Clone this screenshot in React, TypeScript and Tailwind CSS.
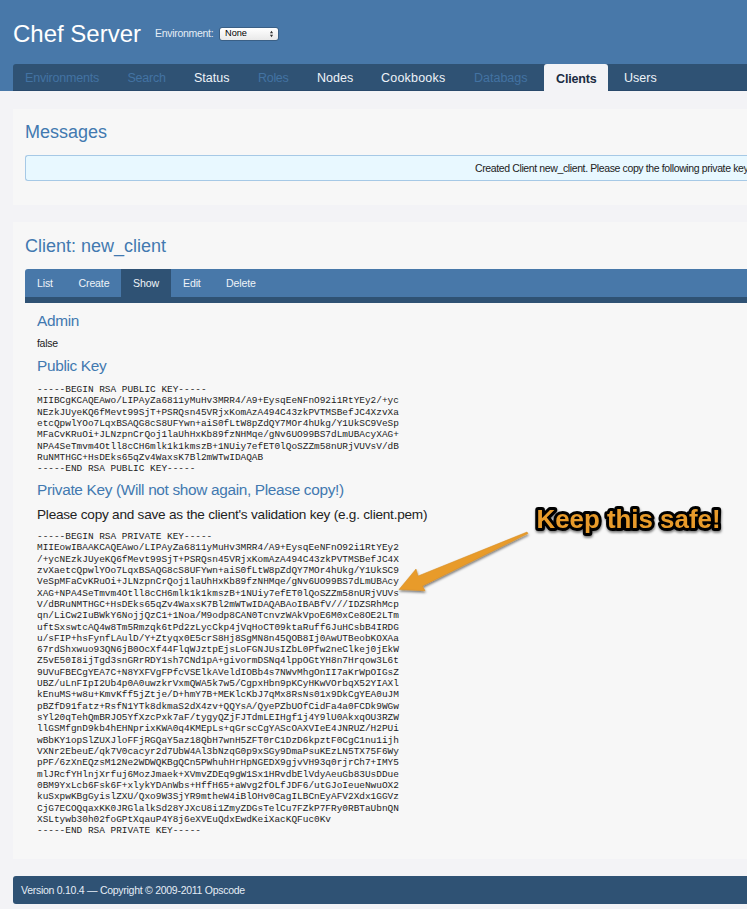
const publicKey = `-----BEGIN RSA PUBLIC KEY-----
MIIBCgKCAQEAwo/LIPAyZa6811yMuHv3MRR4/A9+EysqEeNFnO92i1RtYEy2/+yc
NEzkJUyeKQ6fMevt99SjT+PSRQsn45VRjxKomAzA494C43zkPVTMSBefJC4XzvXa
etcQpwlYOo7LqxBSAQG8cS8UFYwn+aiS0fLtW8pZdQY7MOr4hUkg/Y1UkSC9VeSp
MFaCvKRuOi+JLNzpnCrQoj1laUhHxKb89fzNHMqe/gNv6UO99BS7dLmUBAcyXAG+
NPA4SeTmvm4Otll8cCH6mlk1k1kmszB+1NUiy7efET0lQoSZZm58nURjVUVsV/dB
RuNMTHGC+HsDEks65qZv4WaxsK7Bl2mWTwIDAQAB
-----END RSA PUBLIC KEY-----`

const privateKey = `-----BEGIN RSA PRIVATE KEY-----
MIIEowIBAAKCAQEAwo/LIPAyZa6811yMuHv3MRR4/A9+EysqEeNFnO92i1RtYEy2
/+ycNEzkJUyeKQ6fMevt99SjT+PSRQsn45VRjxKomAzA494C43zkPVTMSBefJC4X
zvXaetcQpwlYOo7LqxBSAQG8cS8UFYwn+aiS0fLtW8pZdQY7MOr4hUkg/Y1UkSC9
VeSpMFaCvKRuOi+JLNzpnCrQoj1laUhHxKb89fzNHMqe/gNv6UO99BS7dLmUBAcy
XAG+NPA4SeTmvm4Otll8cCH6mlk1k1kmszB+1NUiy7efET0lQoSZZm58nURjVUVs
V/dBRuNMTHGC+HsDEks65qZv4WaxsK7Bl2mWTwIDAQABAoIBABfV///IDZSRhMcp
qn/LiCw2IuBWkY6NojjQzC1+1Noa/M9odp8CAN0TcnvzWAkVpoE6M0xCe8OE2LTm
uftSxswtcAQ4w8Tm5Rmzqk6tPd2zLycCkp4jVqHoCT09ktaRuff6JuHCsbB4IRDG
u/sFIP+hsFynfLAulD/Y+Ztyqx0E5crS8Hj8SgMN8n45QOB8Ij0AwUTBeobKOXAa
67rdShxwuo93QN6jB0OcXf44FlqWJztpEjsLoFGNJUsIZbL0Pfw2neClkej0jEkW
Z5vE50I8ijTgd3snGRrRDY1sh7CNd1pA+givormDSNq4lppOGtYH8n7Hrqow3L6t
9UVuFBECgYEA7C+N8YXFVgFPfcVSElkAVeldIOBb4s7NWvMhgOnII7aKrWpOIGsZ
UBZ/uLnFIpI2Ub4p0A0uwzkrVxmQWA5k7w5/CgpxHbn9pKCyHKwVOrbqX52YIAXl
kEnuMS+w8u+KmvKff5jZtje/D+hmY7B+MEKlcKbJ7qMx8RsNs01x9DkCgYEA0uJM
pBZfD91fatz+RsfN1YTk8dkmaS2dX4zv+QQYsA/QyePZbUOfCidFa4a0FCDk9WGw
sYl20qTehQmBRJO5YfXzcPxk7aF/tygyQZjFJTdmLEIHgf1j4Y9lU0AkxqOU3RZW
llGSMfgnD9kb4hEHNprixKWA0q4KMEpLs+qGrscCgYAScOAXVIeE4JNRUZ/H2PUi
wBbKY1opSlZUXJloFFjRGQaY5az18QbH7wnH5ZFT0rC1DzD6kpztF0CgC1nu1ijh
VXNr2EbeuE/qk7V0cacyr2d7UbW4Al3bNzqG0p9xSGy9DmaPsuKEzLN5TX75F6Wy
pPF/6zXnEQzsM12Ne2WDWQKBgQCn5PWhuhHrHpNGEDX9gjvVH93q0rjrCh7+IMY5
mlJRcfYHlnjXrfuj6MozJmaek+XVmvZDEq9gW1Sx1HRvdbElVdyAeuGb83UsDDue
0BM9YxLcb6Fsk6F+xlykYDAnWbs+HffH65+aWvg2fOLfJDF6/utGJoIeueNwuOX2
kuSxpwKBgGyislZXU/Qxo9W3SjYR9mtheW4iBlOHv0CagILBCnEyAFV2Xdx1GGVz
CjG7ECOQqaxKK0JRGlalkSd28YJXcU8i1ZmyZDGsTelCu7FZkP7FRy0RBTaUbnQN
XSLtywb30h02foGPtXqauP4Y8j6eXVEuQdxEwdKeiXacKQFuc0Kv
-----END RSA PRIVATE KEY-----`

const tabs = [
  { label: 'Environments', width: 'w-[102.5px] tracking-[-0.2px]', muted: true },
  { label: 'Search', width: 'w-[66.5px] tracking-[-0.25px]', muted: true },
  { label: 'Status', width: 'w-[64px]' },
  { label: 'Roles', width: 'w-[59px] tracking-[-0.3px]', muted: true },
  { label: 'Nodes', width: 'w-[64px]' },
  { label: 'Cookbooks', width: 'w-[93px] tracking-[0.2px]' },
  { label: 'Databags', width: 'w-[82px]', muted: true },
  { label: 'Clients', width: 'w-[64px] tracking-[-0.15px]', active: true },
  { label: 'Users', width: 'w-[64px]' },
]

const actions = [
  { label: 'List', width: 'w-[41.5px]' },
  { label: 'Create', width: 'w-[54.5px]' },
  { label: 'Show', width: 'w-[50px]', active: true },
  { label: 'Edit', width: 'w-[43px]' },
  { label: 'Delete', width: 'w-[54px]' },
]

function KeyBlock({ text }: { text: string }) {
  return (
    <pre className="font-['Liberation_Mono','Courier_New',monospace] text-[9.43px] leading-[11.31px] text-[#1c1c1c]">
      {text}
    </pre>
  )
}

function Heading({ children }: { children: string }) {
  return (
    <h3 className="h-5 text-[15.4px] leading-5 tracking-[-0.335px] text-[#4279b0]">{children}</h3>
  )
}

function Header() {
  return (
    <header className="h-[91px] bg-[#4878a9] pl-[13px]">
      <div className="flex h-16 items-center pt-1">
        <h1 className="w-[142px] text-[24px] leading-7 text-white">Chef Server</h1>
        <span className="w-[64px] text-[10.5px] tracking-[-0.3px] text-[#e4edf6]">Environment:</span>
        <button className="flex h-[14px] w-[60px] items-center justify-between rounded-[3px] border border-[#3a5f85] bg-linear-to-b from-white to-[#e9e9e9] pr-[4px] pl-[5px] text-[9.2px] text-black">
          None
          <svg width="5" height="8" viewBox="0 0 5 8" fill="#333">
            <path d="M2.5 .8 4.1 3.2H.9zM2.5 7.2.9 4.8h3.2z" />
          </svg>
        </button>
      </div>
      <nav className="flex h-[27px] rounded-tl-[3px] border-b border-[#29496b] bg-[#2f5274]">
        {tabs.map((tab) => (
          <a
            key={tab.label}
            className={`h-[27px] shrink-0 pl-3 text-[12.5px] leading-7 ${tab.width} ${
              tab.active
                ? 'rounded-t-[3px] bg-[#f3f3f6] pt-px font-bold text-[#1a2b42]'
                : tab.muted
                  ? 'text-[#4373a3]'
                  : 'text-[#eef3f8]'
            } ${tab.label === 'Users' ? 'ml-1' : ''}`}
          >
            {tab.label}
          </a>
        ))}
      </nav>
    </header>
  )
}

export default function App() {
  return (
    <div className="relative h-[909px] w-[747px] overflow-hidden bg-[#f3f3f6] font-['Liberation_Sans',Arial,sans-serif] whitespace-nowrap">
      <Header />
      <main className="mt-[18px] ml-[13px]">
        <section className="h-[96px] bg-[#f7f7f7] pt-[11px] pl-3">
          <h2 className="h-6 text-[18px] leading-6 text-[#4279b0]">Messages</h2>
          <div className="mt-[11px] h-[26px] rounded-l-[3px] border border-r-0 border-[#a6c9e6] bg-[#e8f8ff] pl-[449px] text-[10.5px] leading-6 tracking-[-0.38px] text-[#222]">
            Created Client new_client. Please copy the following private key
          </div>
        </section>
        <section className="mt-[17px] h-[637px] bg-[#f7f7f7] pt-3 pl-3">
          <h2 className="h-6 text-[18px] leading-6 text-[#4279b0]">Client: new_client</h2>
          <nav className="mt-[11px] flex h-[34px] rounded-tl-[3px] border-b-[6px] border-[#2f5274] bg-[#4878a9]">
            {actions.map((action) => (
              <a
                key={action.label}
                className={`h-7 shrink-0 pl-3 text-[10.6px] leading-[29px] tracking-[-0.15px] text-[#eef3f8] ${action.width} ${
                  action.active ? 'bg-[#2f5274]' : ''
                }`}
              >
                {action.label}
              </a>
            ))}
          </nav>
          <div className="pt-2 pl-3">
            <Heading>Admin</Heading>
            <p className="mt-1 h-4 text-[10.5px] leading-4 tracking-[-0.3px] text-[#222]">false</p>
            <div className="mt-[5px]">
              <Heading>Public Key</Heading>
            </div>
            <div className="mt-2 h-[96px]">
              <KeyBlock text={publicKey} />
            </div>
            <Heading>Private Key (Will not show again, Please copy!)</Heading>
            <p className="mt-[5px] h-5 text-[13.6px] leading-5 tracking-[-0.23px] text-[#222]">
              Please copy and save as the client's validation key (e.g. client.pem)
            </p>
            <div className="mt-[6px]">
              <KeyBlock text={privateKey} />
            </div>
          </div>
        </section>
      </main>
      <footer className="mt-[17px] ml-[13px] h-7 rounded-l-[3px] bg-[#2f5274] pl-2 text-[10.5px] leading-7 tracking-[-0.27px] text-[#e4edf6]">
        Version 0.10.4 — Copyright © 2009-2011 Opscode
      </footer>
      {/* Callout over the key */}
      <svg className="absolute top-[490px] left-[380px]" width="367" height="120" viewBox="0 0 367 120">
        <defs>
          <filter id="shade" x="-20%" y="-20%" width="140%" height="150%">
            <feDropShadow dx="0.5" dy="1.8" stdDeviation="1.3" floodOpacity="0.5" />
          </filter>
        </defs>
        <path
          d="M19 99.5 36 79 38 86 147 42 148 43.5 42.5 96 45 100.7z"
          fill="#e89b2b"
          stroke="#d58c25"
          strokeWidth=".5"
          filter="url(#shade)"
        />
        <text
          x="156.5"
          y="38"
          textLength="184"
          lengthAdjust="spacingAndGlyphs"
          fontSize="26"
          fontWeight="bold"
          fill="#e89b2b"
          stroke="#000"
          strokeWidth="6"
          strokeLinejoin="round"
          paintOrder="stroke"
          filter="url(#shade)"
        >
          Keep this safe!
        </text>
      </svg>
    </div>
  )
}
